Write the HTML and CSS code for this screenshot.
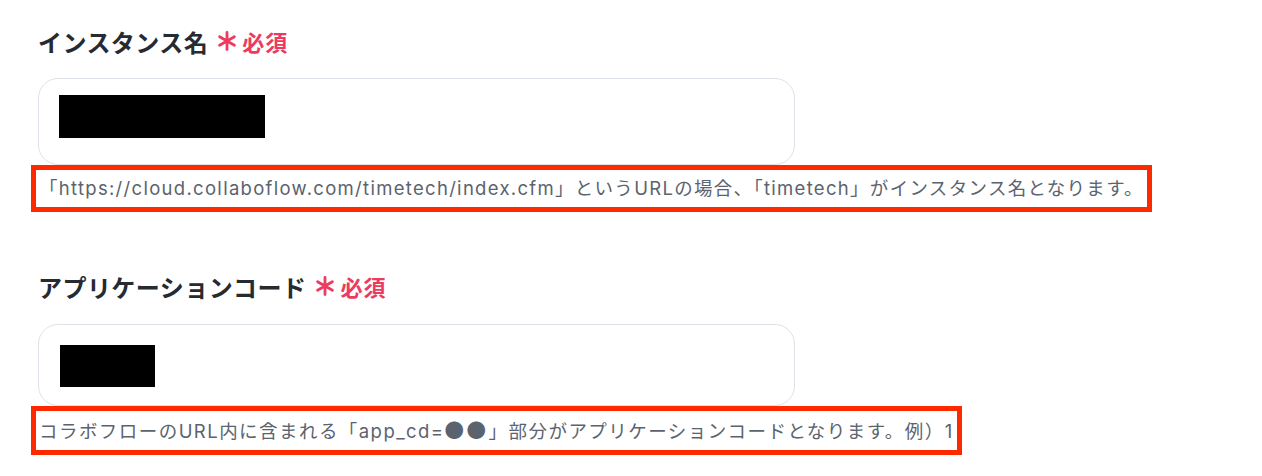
FILE: index.html
```html
<!DOCTYPE html>
<html lang="ja">
<head>
<meta charset="utf-8">
<link rel="stylesheet" href="styles.css">
</head>
<body>
<main class="form">
  <section class="field">
    <div class="field-label">
      <span class="label-text">インスタンス名</span>
      <svg class="req-mark" viewBox="0 0 20 20" aria-hidden="true"><path d="M10 1.5V18.5M2.6 5.75L17.4 14.25M2.6 14.25L17.4 5.75"/></svg>
      <span class="req-text">必須</span>
    </div>
    <div class="input"><div class="redact redact-wide"></div></div>
    <div class="help-row"><p class="help">「https://cloud.collaboflow.com/timetech/index.cfm」というURLの場合、「timetech」がインスタンス名となります。</p></div>
  </section>
  <section class="field field-second">
    <div class="field-label">
      <span class="label-text">アプリケーションコード</span>
      <svg class="req-mark" viewBox="0 0 20 20" aria-hidden="true"><path d="M10 1.5V18.5M2.6 5.75L17.4 14.25M2.6 14.25L17.4 5.75"/></svg>
      <span class="req-text">必須</span>
    </div>
    <div class="input input-second"><div class="redact redact-narrow"></div></div>
    <div class="help-row"><p class="help help-wide">コラボフローのURL内に含まれる「app_cd=<span class="cjk">●●</span>」部分がアプリケーションコードとなります。例）1</p></div>
  </section>
</main>
</body>
</html>
```
FILE: styles.css
```css
html, body {
  margin: 0;
  background: #ffffff;
}
body {
  font-family: Inter, "Noto Sans CJK JP", sans-serif;
}
.form {
  padding: 25px 0 0 38px;
}
.field-second {
  margin-top: 58px;
}
.field-label {
  display: flex;
  align-items: center;
  height: 32px;
  font-size: 24px;
  font-weight: 600;
  color: #262a31;
  font-family: "Noto Sans CJK JP", sans-serif;
}
.label-text {
  letter-spacing: 0.45px;
}
.req-mark {
  width: 20px;
  height: 20px;
  margin-left: 9px;
  fill: none;
  stroke: #ec3a60;
  stroke-width: 2.8;
  stroke-linecap: round;
}
.req-text {
  margin-left: 5px;
  font-size: 22px;
  font-weight: 600;
  letter-spacing: 1px;
  color: #ec3a60;
}
.input {
  box-sizing: border-box;
  width: 757px;
  height: 87px;
  margin-top: 21px;
  padding: 16px 20px;
  border: 1px solid #dde2e9;
  border-radius: 20px;
  background: #fff;
}
.input-second {
  margin-top: 22px;
  height: 82px;
  padding-top: 20px;
}
.redact {
  background: #000;
}
.redact-wide {
  width: 206px;
  height: 43px;
}
.redact-narrow {
  width: 95px;
  height: 42px;
  margin-left: 1px;
}
.help-row {
  margin-left: -7px;
}
.help {
  display: inline-block;
  margin: 0;
  padding: 0 3px;
  border: 5px solid #ff2900;
  font-size: 18.5px;
  letter-spacing: 1.3px;
  line-height: 37px;
  color: #5b636e;
  white-space: nowrap;
}
.help-wide {
  letter-spacing: 1.45px;
}
.cjk {
  font-family: "Noto Sans CJK JP", sans-serif;
  font-size: 19.5px;
  letter-spacing: 2.5px;
}
```
